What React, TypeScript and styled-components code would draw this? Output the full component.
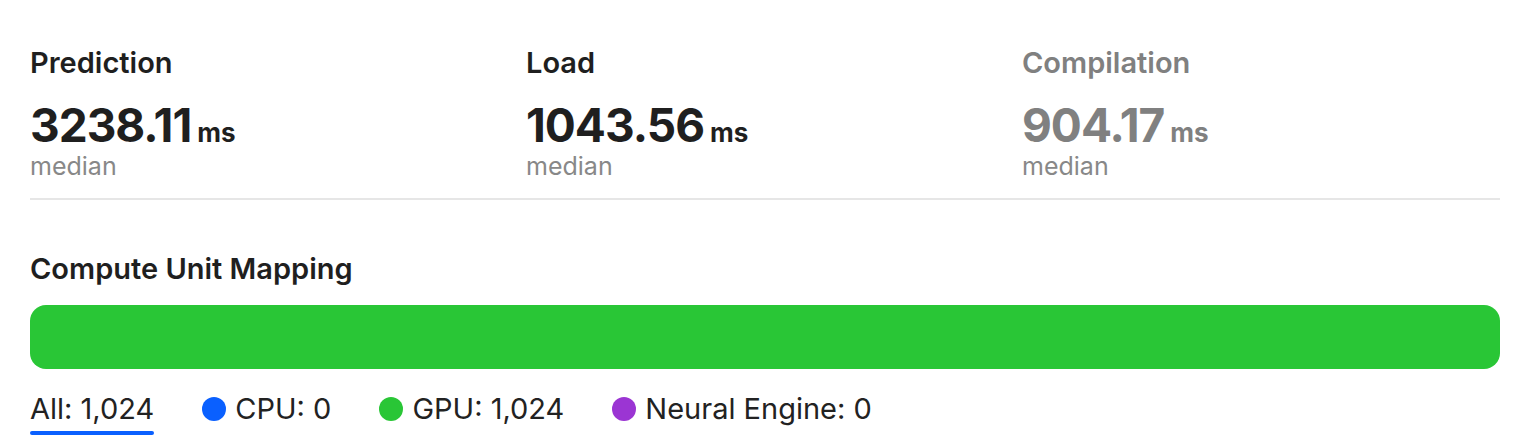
import styled, { createGlobalStyle } from "styled-components";

const GlobalStyle = createGlobalStyle`
  body {
    margin: 0;
    background: #ffffff;
    font-family: Inter, "Noto Sans", sans-serif;
    color: #1f1f1f;
  }
`;

type Metric = { title: string; value: string; muted?: boolean };

const metrics: Metric[] = [
  { title: "Prediction", value: "3238.11" },
  { title: "Load", value: "1043.56" },
  { title: "Compilation", value: "904.17", muted: true },
];

type Unit = { label: string; count: string; color?: string; active?: boolean };

const units: Unit[] = [
  { label: "All", count: "1,024", active: true },
  { label: "CPU", count: "0", color: "#0a60ff" },
  { label: "GPU", count: "1,024", color: "#29c636" },
  { label: "Neural Engine", count: "0", color: "#9b35d3" },
];

export default function App() {
  return (
    <>
      <GlobalStyle />
      <Page>
        <MetricsRow>
          {metrics.map((m) => (
            <MetricCard key={m.title} $muted={m.muted}>
              <MetricTitle>{m.title}</MetricTitle>
              <ValueLine>
                <Value>{m.value}</Value>
                <UnitLabel>ms</UnitLabel>
              </ValueLine>
              <Caption>median</Caption>
            </MetricCard>
          ))}
        </MetricsRow>

        <Section>
          <SectionTitle>Compute Unit Mapping</SectionTitle>
          <Bar>
            <BarFill style={{ width: "100%" }} />
          </Bar>
          <Legend>
            {units.map((u) => (
              <LegendItem key={u.label} $active={u.active}>
                {u.color && <Dot $color={u.color} />}
                {u.label}: {u.count}
              </LegendItem>
            ))}
          </Legend>
        </Section>
      </Page>
    </>
  );
}

const Page = styled.div`
  padding: 44px 20px 0 30px;
  width: 1470px;
`;

const MetricsRow = styled.div`
  display: grid;
  grid-template-columns: repeat(3, 1fr);
  column-gap: 18px;
  padding-bottom: 17px;
  border-bottom: 2px solid #e6e6e6;
`;

const MetricCard = styled.div<{ $muted?: boolean }>`
  display: flex;
  flex-direction: column;
  color: ${(p) => (p.$muted ? "#808080" : "#1f1f1f")};
`;

const MetricTitle = styled.div`
  font-size: 29px;
  font-weight: 600;
  line-height: 38px;
`;

const ValueLine = styled.div`
  display: flex;
  align-items: baseline;
  gap: 6px;
  margin-top: 17px;
`;

const Value = styled.span`
  font-size: 46px;
  font-weight: 700;
  line-height: 52px;
  letter-spacing: -1px;
`;

const UnitLabel = styled.span`
  font-size: 26px;
  font-weight: 700;
`;

const Caption = styled.div`
  font-size: 25px;
  line-height: 30px;
  color: #888888;
`;

const Section = styled.div`
  padding-top: 50px;
`;

const SectionTitle = styled.div`
  font-size: 29px;
  font-weight: 600;
  line-height: 38px;
`;

const Bar = styled.div`
  margin-top: 17px;
  height: 64px;
  border-radius: 16px;
  background: #e8e8e8;
  overflow: hidden;
`;

const BarFill = styled.div`
  height: 100%;
  background: #29c636;
`;

const Legend = styled.div`
  display: flex;
  gap: 48px;
  margin-top: 20px;
`;

const LegendItem = styled.div<{ $active?: boolean }>`
  position: relative;
  display: flex;
  align-items: center;
  gap: 9px;
  font-size: 29px;
  line-height: 40px;
  color: #222222;
  padding-bottom: 6px;

  &::after {
    content: "";
    display: ${(p) => (p.$active ? "block" : "none")};
    position: absolute;
    left: 0;
    right: 0;
    bottom: 0;
    height: 4px;
    border-radius: 2px;
    background: #0a60ff;
  }
`;

const Dot = styled.span<{ $color: string }>`
  width: 24px;
  height: 24px;
  border-radius: 50%;
  background: ${(p) => p.$color};
`;
